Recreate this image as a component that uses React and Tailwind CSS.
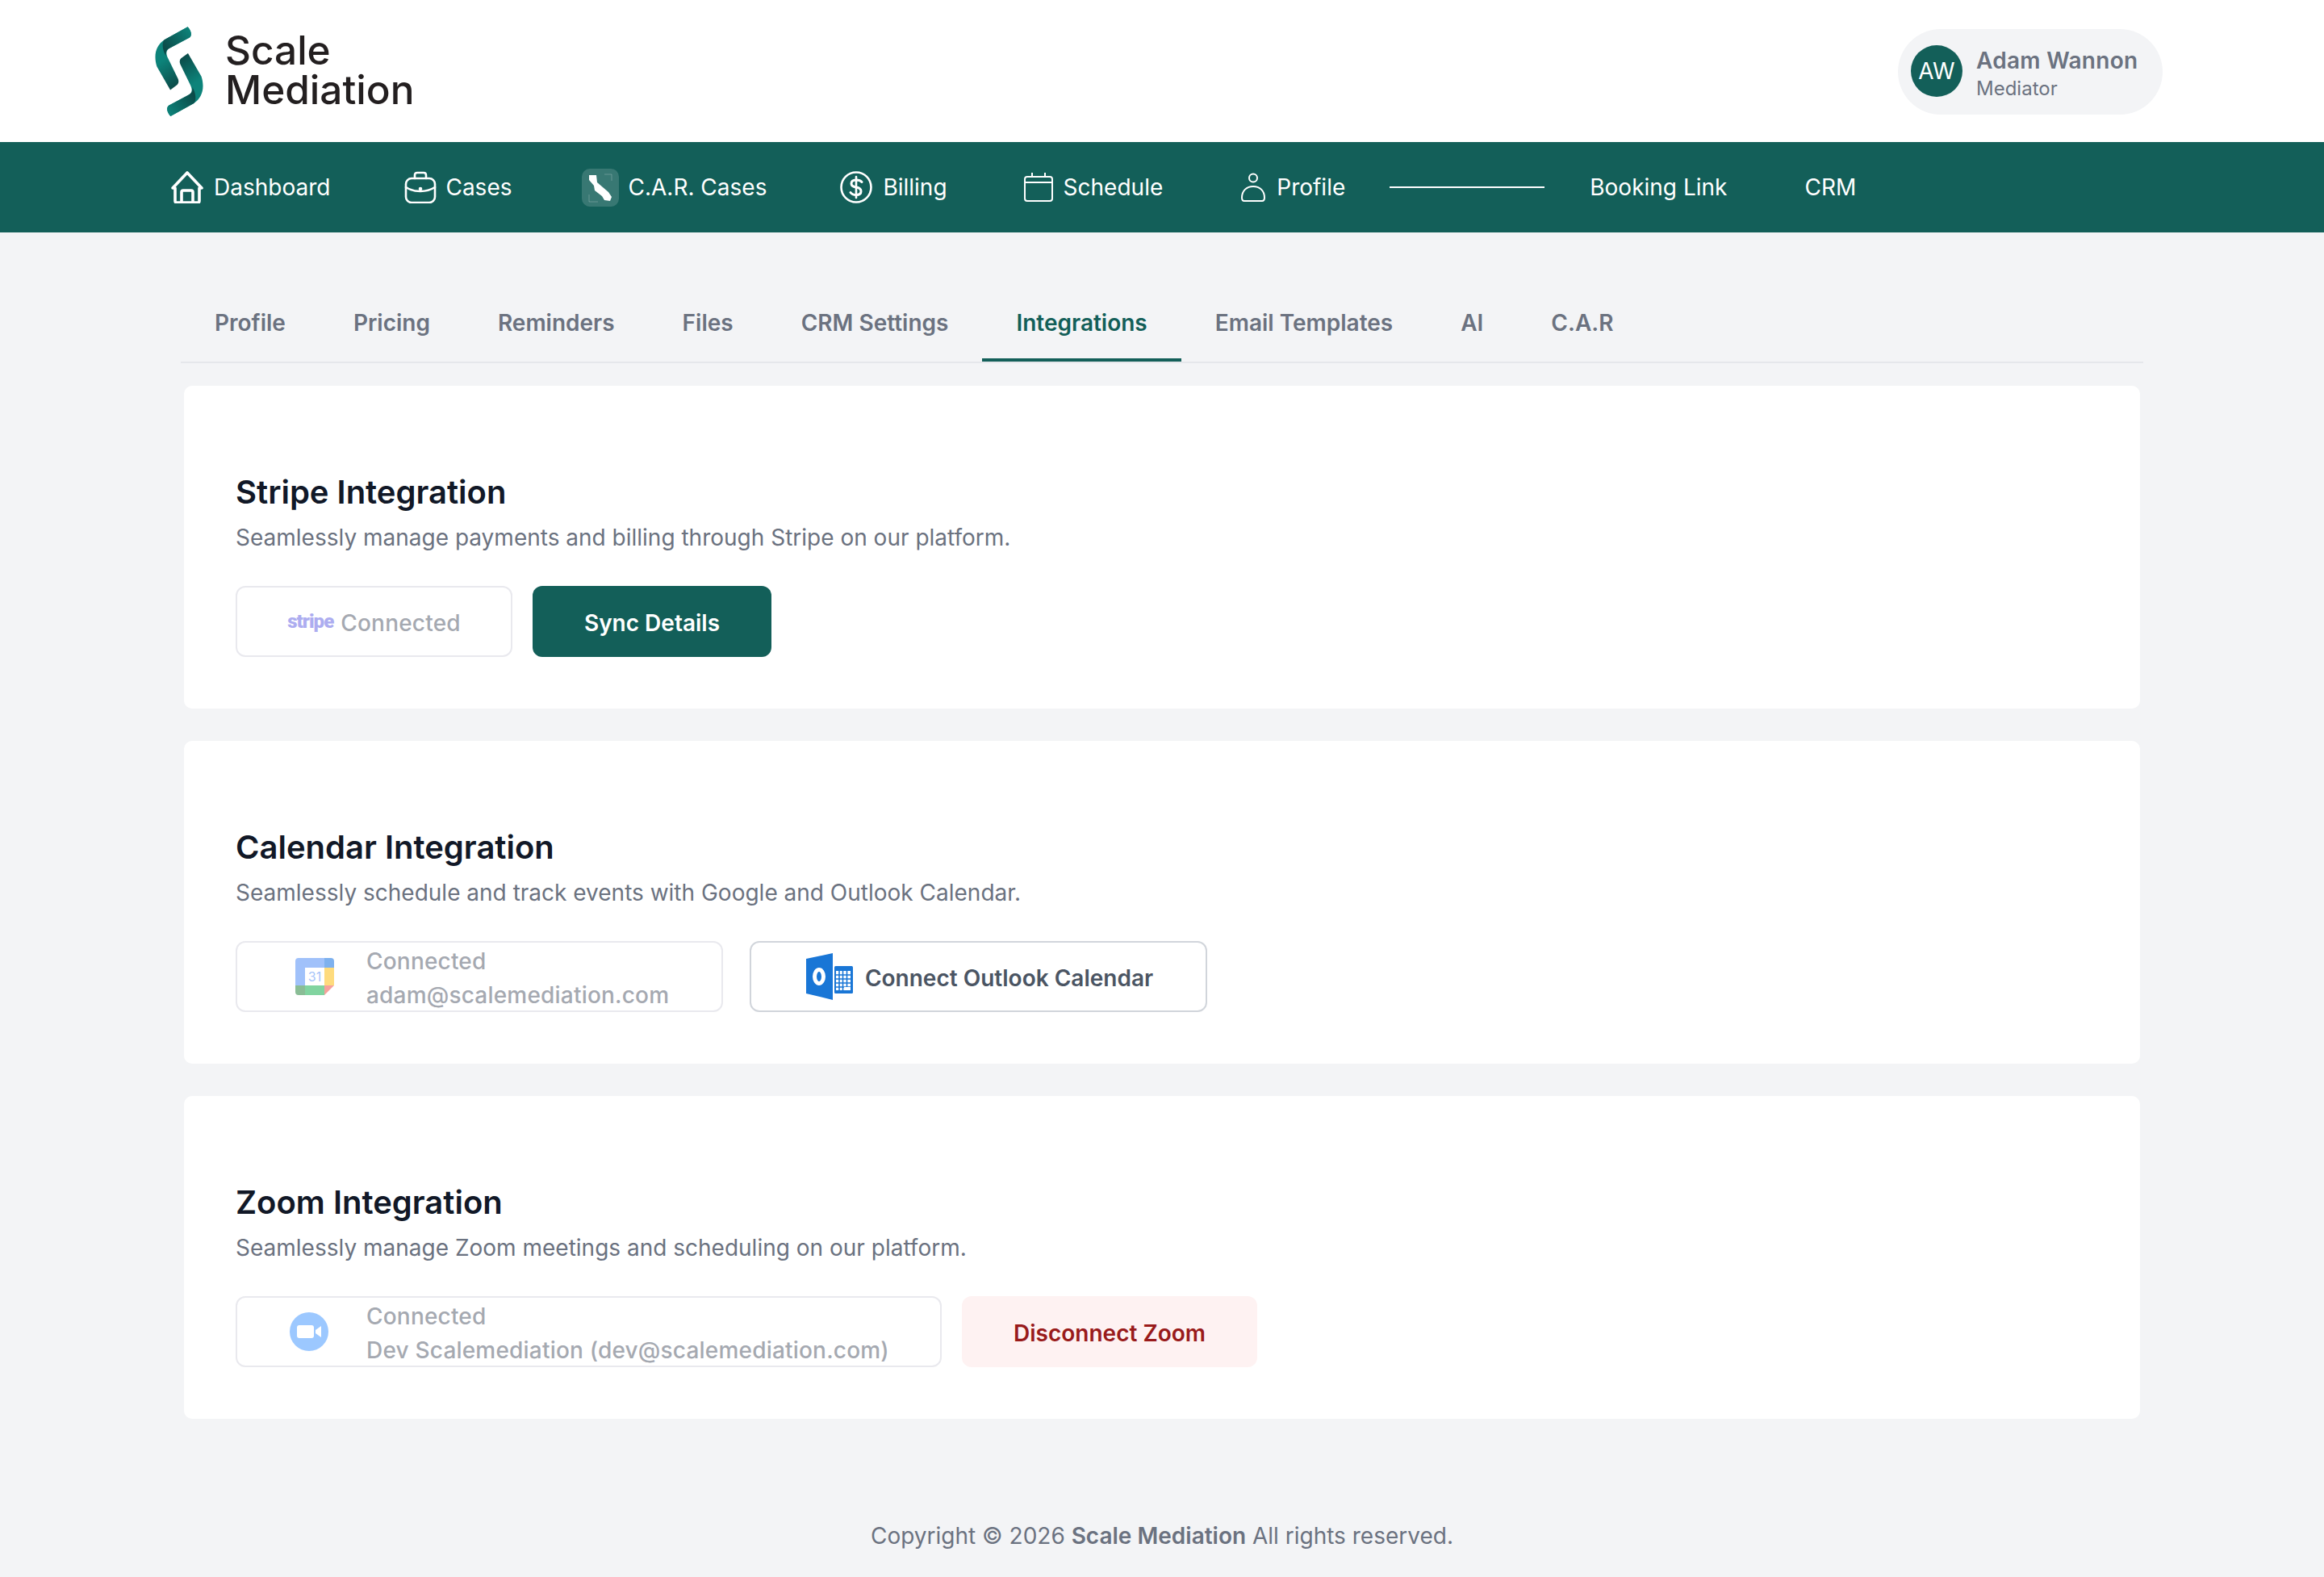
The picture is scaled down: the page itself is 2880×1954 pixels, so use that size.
import { useState } from 'react'

const HomeIcon = () => (
  <svg width="40" height="40" viewBox="0 0 40 40" fill="none" stroke="white" strokeWidth="3.6" strokeLinejoin="round" strokeLinecap="round">
    <path d="M20 2 L38 21 L35 21 L35 37 Q35 39 33 39 L7 39 Q5 39 5 37 L5 21 L2 21 Z" />
    <path d="M13 39 L13 26 Q13 24 15 24 L25 24 Q27 24 27 26 L27 39" />
  </svg>
)

const CaseIcon = () => (
  <svg width="40" height="40" viewBox="0 0 40 40" fill="none" stroke="white" strokeWidth="2.6" strokeLinecap="round">
    <rect x="2" y="9" width="36" height="30" rx="7" />
    <path d="M13 9 V5 Q13 2 16 2 H24 Q27 2 27 5 V9" />
    <path d="M2 20 Q10 25 20 25 Q30 25 38 20" />
    <circle cx="20" cy="22" r="1" fill="white" />
  </svg>
)

const CalIcon = () => (
  <svg width="46" height="47" viewBox="0 0 46 47" fill="none">
    <rect width="46" height="47" rx="10" fill="white" fillOpacity="0.16" />
    <path d="M9 8 H18 L19 17 L33 29 L37 35 L35 40 L28 39 L25 34 L16 27 L15 21 L9 14 Z" fill="white" />
    <path d="M28 7 H37 V15 M9 32 V41 H20" stroke="white" strokeOpacity="0.3" strokeWidth="0.8" />
  </svg>
)

const DollarIcon = () => (
  <svg width="40" height="40" viewBox="0 0 40 40" fill="none" stroke="white" strokeWidth="2.6" strokeLinecap="round">
    <circle cx="20" cy="20" r="18.5" />
    <path d="M27 13.5 Q25 11 20 11 Q14 11 14 15.5 Q14 19 20 20 Q26 21 26 25 Q26 29.5 20 29.5 Q15 29.5 13 26.5" strokeWidth="3" />
    <path d="M20 7 V33" />
  </svg>
)

const ScheduleIcon = () => (
  <svg width="36" height="36" viewBox="0 0 36 36" fill="none" stroke="white" strokeWidth="2">
    <rect x="1" y="5" width="34" height="30" rx="3" />
    <path d="M1 12 H35 M10 0 V6 M26 0 V6" />
  </svg>
)

const PersonIcon = () => (
  <svg width="30" height="36" viewBox="0 0 30 36" fill="none" stroke="white" strokeWidth="2">
    <circle cx="15" cy="6.5" r="5" />
    <path d="M1 31 C1 22 7 17 15 17 C23 17 29 22 29 31 Q29 35 26 35 H4 Q1 35 1 31 Z" />
  </svg>
)

const GoogleCal = () => (
  <svg width="48" height="46" viewBox="0 0 48 46" className="ml-[7px] shrink-0">
    <path d="M36 0 H4 Q0 0 0 4 V34 H12 V12 H36 Z" fill="#a0c1fa" />
    <path d="M36 0 H44 Q48 0 48 4 V12 H36 Z" fill="#7eb1ee" />
    <rect x="36" y="12" width="12" height="22" fill="#fedb7d" />
    <rect x="12" y="34" width="24" height="12" fill="#81d4a0" />
    <path d="M0 34 H12 V46 H4 Q0 46 0 42 Z" fill="#8abd96" />
    <path d="M36 34 H48 L36 46 Z" fill="#f6a19b" />
    <text x="24" y="29" textAnchor="middle" fontSize="16" fontFamily="Inter" fill="#a6c4f9">31</text>
  </svg>
)

const OutlookIcon = () => (
  <svg width="58" height="58" viewBox="0 0 58 58" className="shrink-0">
    <path d="M0 7 L33 0 V58 L0 50 Z" fill="#1976d6" />
    <ellipse cx="16" cy="29" rx="5.5" ry="8.5" fill="none" stroke="white" strokeWidth="5" />
    <rect x="35" y="16" width="23" height="34" rx="1.5" fill="#1976d6" />
    <path d="M37 22 H55 V46 H37 Z" fill="white" />
    <path d="M41 22 V46 M45.5 22 V46 M50.5 22 V46 M37 27 H55 M37 32 H55 M37 37 H55 M37 42 H55" stroke="#1976d6" strokeWidth="1.6" />
    <path d="M47 42 H55 V46 H47 Z" fill="white" />
  </svg>
)

const ZoomIcon = () => (
  <svg width="48" height="48" viewBox="0 0 48 48" className="shrink-0">
    <circle cx="24" cy="24" r="24" fill="#9cc8ff" />
    <rect x="9" y="16" width="21" height="16" rx="3" fill="white" />
    <path d="M32 22 L39 17 V31 L32 26 Z" fill="white" />
  </svg>
)

const Logo = () => (
  <svg width="64" height="113" viewBox="62 48 186 340">
    <defs>
      <linearGradient id="up" x1="190" y1="55" x2="95" y2="125" gradientUnits="userSpaceOnUse">
        <stop offset="0" stopColor="#0d837a" />
        <stop offset="1" stopColor="#0b4a48" />
      </linearGradient>
      <linearGradient id="lo" x1="70" y1="160" x2="145" y2="275" gradientUnits="userSpaceOnUse">
        <stop offset="0.2" stopColor="#0d837a" />
        <stop offset="1" stopColor="#0b4a48" />
      </linearGradient>
    </defs>
    <g>
      <path d="M187 52 L100 100 C70 120 58 155 72 200 L122 287 L148 268 Q156 260 151 246 L114 170 C104 150 106 138 122 130 L194 92 C206 82 197 62 187 52 Z" fill="url(#lo)" />
      <path d="M187 52 L100 100 C90 108 92 140 106 160 C105 142 108 137 122 130 L194 92 C206 82 197 62 187 52 Z" fill="url(#up)" />
    </g>
    <g transform="rotate(180 155 218.5)">
      <path d="M187 52 L100 100 C70 120 58 155 72 200 L122 287 L148 268 Q156 260 151 246 L114 170 C104 150 106 138 122 130 L194 92 C206 82 197 62 187 52 Z" fill="url(#lo)" />
      <path d="M187 52 L100 100 C90 108 92 140 106 160 C105 142 108 137 122 130 L194 92 C206 82 197 62 187 52 Z" fill="url(#up)" />
    </g>
  </svg>
)

const navItems = [
  { label: "Dashboard", icon: <HomeIcon />, cls: "gap-[13px]" },
  { label: "Cases", icon: <CaseIcon />, cls: "gap-[11px]" },
  { label: "C.A.R. Cases", icon: <CalIcon />, cls: "gap-[11px] -ml-[5px]" },
  { label: "Billing", icon: <DollarIcon />, cls: "gap-[13px] -ml-[1px]" },
  { label: "Schedule", icon: <ScheduleIcon />, cls: "gap-[13px] ml-[3px]" },
  { label: "Profile", icon: <PersonIcon />, cls: "gap-[14px] ml-[5px]" },
]

const tabs = ["Profile", "Pricing", "Reminders", "Files", "CRM Settings", "Integrations", "Email Templates", "AI", "C.A.R"]

const Card = ({ title, text, children }) => (
  <div className="mx-[4px] h-[400px] rounded-[10px] bg-white pl-[64px] pt-[104px]">
    <h2 className="text-[40px] leading-[56px] font-semibold text-[#111827]">{title}</h2>
    <p className="mt-[8px] text-[28px] leading-[40px] text-[#6b7280]">{text}</p>
    <div className="mt-[40px] flex gap-[25px]">{children}</div>
  </div>
)

const Connected = ({ icon, email, width }) => (
  <div className={`flex h-[88px] ${width} items-center rounded-[12px] border-2 border-[#e9e9ee] pl-[65px]`}>
    <div className="flex w-[95px] shrink-0 items-center">{icon}</div>
    <div className="pt-[3px] text-[28px] leading-[42px] font-medium tracking-[0.007em] text-[#a5a9b1]">
      <div>Connected</div>
      <div>{email}</div>
    </div>
  </div>
)

export default function App() {
  const [tab] = useState("Integrations")

  return <div className="min-h-[1954px] bg-[#f3f4f6] font-['Inter',sans-serif]">
    <div className="flex h-[176px] items-center justify-between bg-white pl-[190px] pr-[200px]">
      <div className="flex items-center gap-[25px]">
        <Logo />
        <div className="mb-[3px] text-[49.5px] leading-[49px] font-medium text-[#231f20]">
          <div>Scale</div>
          <div>Mediation</div>
        </div>
      </div>
      <div className="mt-[2px] flex h-[106px] w-[328px] items-center rounded-[53px] bg-[#f3f4f6] pl-[16px]">
        <div className="mb-[2px] flex h-[64px] w-[64px] items-center justify-center rounded-full text-[28px] text-white bg-[#135f59]">AW</div>
        <div className="ml-[17px] pt-[3px]">
          <div className="text-[28px] leading-[38px] font-semibold tracking-[0.01em] text-[#6b7280]">Adam Wannon</div>
          <div className="text-[24px] leading-[32px] text-[#6b7280]">Mediator</div>
        </div>
      </div>
    </div>

    <div className="flex h-[112px] items-center pl-[166px] text-[28px] text-white bg-[#135f59]">
      {navItems.map((item) => (
        <div key={item.label} className={`flex items-center px-[46px] ${item.cls}`}>
          {item.icon}
          <span>{item.label}</span>
        </div>
      ))}
      <div className="ml-[9px] mr-[11px] h-[2px] w-[192px] bg-white" />
      <div className="pl-[45px] pr-[46px]">Booking Link</div>
      <div className="pl-[50px]">CRM</div>
    </div>

    <div className="px-[224px] pt-[64px]">
      <div className="flex h-[98px] border-b-2 border-[#e5e7eb]">
        {tabs.map((name) => (
          <div key={name} className={name === tab
            ? "flex h-[96px] items-center border-b-4 border-[#135f59] px-[42px] pt-[3px] text-[28px] font-semibold text-[#135f59]"
            : "flex h-[96px] items-center px-[42px] pb-[1px] text-[28px] font-semibold text-[#6b7280]"}>
            {name}
          </div>
        ))}
      </div>

      <div className="mt-[28px] flex flex-col gap-[40px]">
        <Card title="Stripe Integration" text="Seamlessly manage payments and billing through Stripe on our platform.">
          <div className="flex h-[88px] w-[343px] items-center justify-center gap-[9px] rounded-[12px] border-2 border-[#e9e9ee] pt-[4px]">
            <span className="mb-[4px] font-['Roboto',sans-serif] text-[24px] font-black tracking-[-0.04em] text-[#adadf0]">stripe</span>
            <span className="text-[28px] font-medium tracking-[0.007em] text-[#a5a9b1]">Connected</span>
          </div>
          <div className="flex h-[88px] w-[296px] items-center justify-center rounded-[12px] pt-[4px] text-[28px] font-semibold text-white bg-[#135f59]">Sync Details</div>
        </Card>

        <Card title="Calendar Integration" text="Seamlessly schedule and track events with Google and Outlook Calendar.">
          <Connected icon={<GoogleCal />} email="adam@scalemediation.com" width="w-[604px]" />
          <div className="ml-[8px] flex h-[88px] w-[567px] items-center justify-center gap-[15px] rounded-[12px] border-2 border-[#d1d5db] pl-[3px] text-[28px] font-semibold text-[#4b5563]">
            <OutlookIcon />
            <span className="pt-[3px]">Connect Outlook Calendar</span>
          </div>
        </Card>

        <Card title="Zoom Integration" text="Seamlessly manage Zoom meetings and scheduling on our platform.">
          <Connected icon={<ZoomIcon />} email="Dev Scalemediation (dev@scalemediation.com)" width="w-[875px]" />
          <div className="flex h-[88px] w-[366px] items-center justify-center rounded-[12px] bg-[#fef2f2] pt-[3px] text-[28px] font-semibold text-[#991b1b]">Disconnect Zoom</div>
        </Card>
      </div>

      <div className="mt-[124px] text-center text-[28px] leading-[42px] text-[#6b7280]">
        Copyright © 2026 <span className="font-semibold">Scale Mediation</span> All rights reserved.
      </div>
    </div>
  </div>
}
